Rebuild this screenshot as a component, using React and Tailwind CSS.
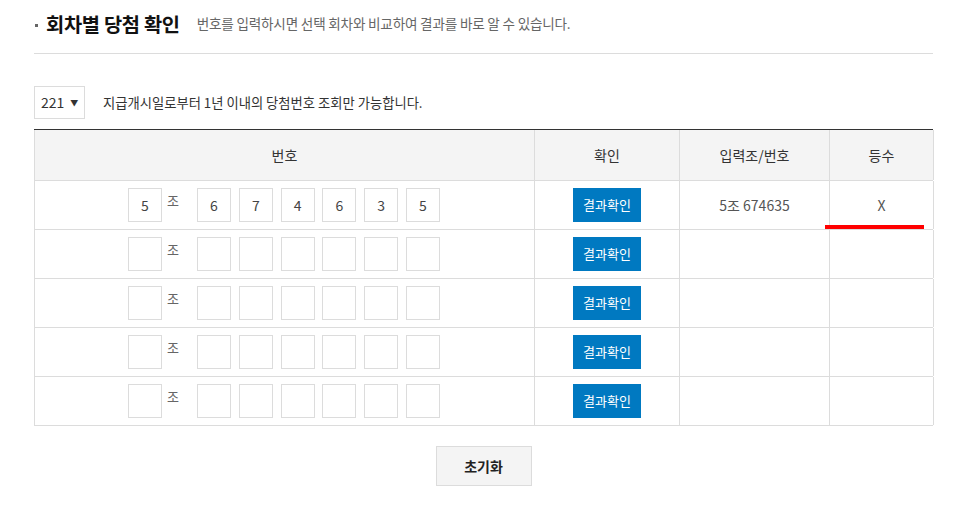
import React from 'react';

const rows = [
  { jo: '5', nums: ['6', '7', '4', '6', '3', '5'], result: '5조 674635', rank: 'X' },
  { jo: '', nums: ['', '', '', '', '', ''], result: '', rank: '' },
  { jo: '', nums: ['', '', '', '', '', ''], result: '', rank: '' },
  { jo: '', nums: ['', '', '', '', '', ''], result: '', rank: '' },
  { jo: '', nums: ['', '', '', '', '', ''], result: '', rank: '' },
];

function Box({ value }) {
  return (
    <div className="w-[34px] h-[34px] border border-[#dcdcdc] flex items-center justify-center text-[14px] text-[#444]">
      {value}
    </div>
  );
}

export default function App() {
  return (
    <div className="w-[977px] h-[506px] bg-white font-['Noto_Sans_CJK_KR',sans-serif] text-[#333]">
      <div className="ml-[34px] w-[899px]">
        {/* Title */}
        <div className="flex items-center h-[54px] border-b border-[#dcdcdc] pb-[6px]">
          <span className="w-[3px] h-[3px] bg-[#666] ml-[1px] mr-[8px] mt-[4px]" />
          <h2 className="text-[19.8px] font-bold text-[#111] tracking-[-0.3px]">회차별 당첨 확인</h2>
          <p className="ml-[17px] text-[13.6px] text-[#666] tracking-[-0.2px]">번호를 입력하시면 선택 회차와 비교하여 결과를 바로 알 수 있습니다.</p>
        </div>

        {/* Round select */}
        <div className="flex items-center mt-[32px]">
          <div className="w-[51px] h-[33px] border border-[#dcdcdc] flex items-center pl-[6px] text-[14px] text-[#333]">
            221<span className="ml-[6px] text-[8px]">▼</span>
          </div>
          <p className="ml-[18px] text-[13.3px] text-[#333]">지급개시일로부터 1년 이내의 당첨번호 조회만 가능합니다.</p>
        </div>

        {/* Table */}
        <div className="mt-[10px] border-t border-[#333]">
          <div className="grid grid-cols-[500px_145px_150px_104px] bg-[#f4f4f4] h-[51px] text-[14px] text-[#333] border-b border-l border-[#dcdcdc]">
            <div className="flex items-center justify-center border-r border-[#dcdcdc]">번호</div>
            <div className="flex items-center justify-center border-r border-[#dcdcdc]">확인</div>
            <div className="flex items-center justify-center border-r border-[#dcdcdc]">입력조/번호</div>
            <div className="flex items-center justify-center border-r border-[#dcdcdc]">등수</div>
          </div>
          {rows.map((r, i) => (
            <div key={i} className="grid grid-cols-[500px_145px_150px_104px] h-[49px] border-b border-l border-[#dcdcdc]">
              <div className="flex items-center pl-[93px] border-r border-[#dcdcdc]">
                <Box value={r.jo} />
                <span className="ml-[5px] w-[30px] text-[13px] text-[#666] -mt-[8px]">조</span>
                <div className="flex gap-[7.8px]">
                  {r.nums.map((n, j) => (
                    <Box key={j} value={n} />
                  ))}
                </div>
              </div>
              <div className="flex items-center justify-center border-r border-[#dcdcdc]">
                <button className="w-[68px] h-[34px] bg-[#0079c1] text-white text-[13px]">결과확인</button>
              </div>
              <div className="flex items-center justify-center border-r border-[#dcdcdc] text-[14px] text-[#555]">{r.result}</div>
              <div className="relative flex items-center justify-center border-r border-[#dcdcdc] text-[14px] text-[#555]">
                {r.rank}
                {i === 0 && <div className="absolute left-[-5px] bottom-[0px] w-[99px] h-[4px] bg-[#ff0000]" />}
              </div>
            </div>
          ))}
        </div>

        {/* Reset */}
        <div className="flex justify-center mt-[20px]">
          <button className="w-[96px] h-[40px] bg-[#f4f4f4] border border-[#dcdcdc] text-[14px] font-bold text-[#222]">초기화</button>
        </div>
      </div>
    </div>
  );
}
